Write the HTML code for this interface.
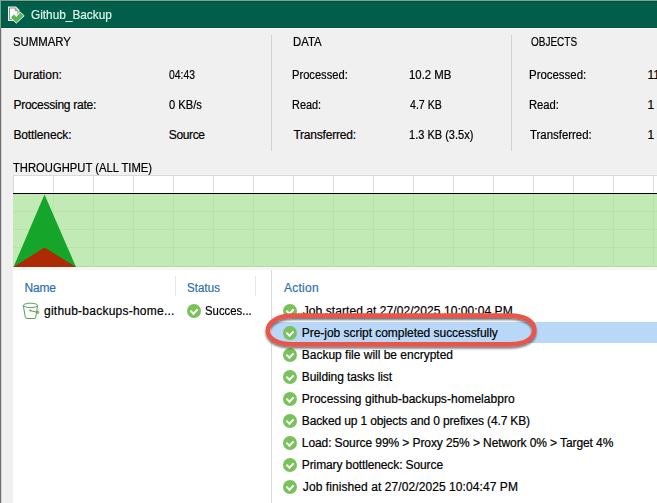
<!DOCTYPE html>
<html><head><meta charset="utf-8">
<style>
*{margin:0;padding:0;box-sizing:border-box}
html,body{width:657px;height:503px;overflow:hidden;background:#f0f0f0}
body{position:relative;font-family:"Liberation Sans",sans-serif;font-size:12px;color:#000}
.a{position:absolute;white-space:nowrap;line-height:14px;-webkit-text-stroke:0.2px currentColor}
.tt{font-size:13px;color:#dff4ee}
.hd{color:#2f6eb2}
#title{position:absolute;left:0;top:1px;width:657px;height:27px;background:linear-gradient(#0d4f3f 0,#0d4f3f 1px,#015e49 1px,#015e49 26px,#08523f 26px)}
#lb{position:absolute;left:0;top:0;width:1px;height:503px;background:linear-gradient(#74a596 0,#74a596 28px,#6f6f6f 28px)}
#lb2{position:absolute;left:1px;top:28px;width:1px;height:475px;background:#d4d4d4}
#topl{position:absolute;left:0;top:0;width:657px;height:1px;background:#74a596}
.sep{position:absolute;width:1px;background:#d2d2d2}
#panel{position:absolute;left:13px;top:270px;width:644px;height:233px;background:#fff}
#hl{position:absolute;left:272px;top:322px;width:385px;height:21px;background:#b9d8f7}
svg{position:absolute;left:0;top:0}
</style></head><body>
<div id="title"></div>
<div id="topl"></div>
<div id="lb"></div><div id="lb2"></div>
<div style="position:absolute;left:1px;top:28px;width:656px;height:1px;background:#f7f7f7"></div>
<svg width="30" height="28">
<path d="M8 6.5 H16 L19.5 10 V21 H8 Z" fill="#f4f6f5"/>
<path d="M9.5 8 H15.3 L18 10.7 V19.5 H9.5 Z" fill="#fbfbfb" stroke="#8a8f8d" stroke-width="1"/>
<path d="M15.3 8 V10.7 H18" fill="none" stroke="#8a8f8d" stroke-width="1"/>
<path d="M10.6 17.3 L13.8 14.1 L16.3 16.6 L20.2 12.1 L24.2 15.8 L16.2 23.2 Z" fill="#5db55a" stroke="#e8f5ec" stroke-width="1"/>
</svg>
<div class="sep" style="left:271px;top:35px;height:116px"></div>
<div class="sep" style="left:511px;top:35px;height:116px"></div>
<svg width="657" height="503">
<rect x="13" y="175" width="644" height="1" fill="#d9d9d9"/>
<rect x="13" y="175" width="1" height="18" fill="#d9d9d9"/>
<rect x="14" y="176" width="643" height="17" fill="#ffffff"/>
<rect x="13" y="194" width="644" height="73" fill="#c1eab4"/><rect x="13" y="267" width="644" height="3" fill="#f5f5f5"/>
<line x1="53.5" y1="176" x2="53.5" y2="193" stroke="#dedede"/><line x1="53.5" y1="194" x2="53.5" y2="266" stroke="#b9e1ac"/><line x1="93.5" y1="176" x2="93.5" y2="193" stroke="#dedede"/><line x1="93.5" y1="194" x2="93.5" y2="266" stroke="#b9e1ac"/><line x1="133.5" y1="176" x2="133.5" y2="193" stroke="#dedede"/><line x1="133.5" y1="194" x2="133.5" y2="266" stroke="#b9e1ac"/><line x1="173.5" y1="176" x2="173.5" y2="193" stroke="#dedede"/><line x1="173.5" y1="194" x2="173.5" y2="266" stroke="#b9e1ac"/><line x1="213.5" y1="176" x2="213.5" y2="193" stroke="#dedede"/><line x1="213.5" y1="194" x2="213.5" y2="266" stroke="#b9e1ac"/><line x1="253.5" y1="176" x2="253.5" y2="193" stroke="#dedede"/><line x1="253.5" y1="194" x2="253.5" y2="266" stroke="#b9e1ac"/><line x1="293.5" y1="176" x2="293.5" y2="193" stroke="#dedede"/><line x1="293.5" y1="194" x2="293.5" y2="266" stroke="#b9e1ac"/><line x1="333.5" y1="176" x2="333.5" y2="193" stroke="#dedede"/><line x1="333.5" y1="194" x2="333.5" y2="266" stroke="#b9e1ac"/><line x1="373.5" y1="176" x2="373.5" y2="193" stroke="#dedede"/><line x1="373.5" y1="194" x2="373.5" y2="266" stroke="#b9e1ac"/><line x1="413.5" y1="176" x2="413.5" y2="193" stroke="#dedede"/><line x1="413.5" y1="194" x2="413.5" y2="266" stroke="#b9e1ac"/><line x1="453.5" y1="176" x2="453.5" y2="193" stroke="#dedede"/><line x1="453.5" y1="194" x2="453.5" y2="266" stroke="#b9e1ac"/><line x1="493.5" y1="176" x2="493.5" y2="193" stroke="#dedede"/><line x1="493.5" y1="194" x2="493.5" y2="266" stroke="#b9e1ac"/><line x1="533.5" y1="176" x2="533.5" y2="193" stroke="#dedede"/><line x1="533.5" y1="194" x2="533.5" y2="266" stroke="#b9e1ac"/><line x1="573.5" y1="176" x2="573.5" y2="193" stroke="#dedede"/><line x1="573.5" y1="194" x2="573.5" y2="266" stroke="#b9e1ac"/><line x1="613.5" y1="176" x2="613.5" y2="193" stroke="#dedede"/><line x1="613.5" y1="194" x2="613.5" y2="266" stroke="#b9e1ac"/><line x1="653.5" y1="176" x2="653.5" y2="193" stroke="#dedede"/><line x1="653.5" y1="194" x2="653.5" y2="266" stroke="#b9e1ac"/><line x1="14" y1="211.5" x2="657" y2="211.5" stroke="#b9e1ac"/><line x1="14" y1="229.5" x2="657" y2="229.5" stroke="#b9e1ac"/><line x1="14" y1="247.5" x2="657" y2="247.5" stroke="#b9e1ac"/>
<rect x="13" y="266" width="644" height="1" fill="#b3d9a6"/>
<rect x="13" y="193" width="644" height="1" fill="#000"/>
<polygon points="13.5,267 44.5,194.5 76,267" fill="#14a52a"/>
<polygon points="13.5,267 44.5,247.5 76,267" fill="#ad2a04"/>
</svg>
<div id="panel"></div>
<div id="hl"></div>
<svg width="657" height="503">
<rect x="271" y="270" width="1" height="233" fill="#dadada"/>
<rect x="175" y="276" width="1" height="20" fill="#e6e6e6"/>
<rect x="255" y="276" width="1" height="20" fill="#e6e6e6"/>
<circle cx="194" cy="311" r="7" fill="#79c15a"/><path d="M190.4 310.6 L193.5 313.7 L197.6 309.4" fill="none" stroke="#fff" stroke-width="2"/>
<circle cx="290" cy="311" r="7" fill="#79c15a"/><path d="M286.4 310.6 L289.5 313.7 L293.6 309.4" fill="none" stroke="#fff" stroke-width="2"/><circle cx="290" cy="333" r="7" fill="#79c15a"/><path d="M286.4 332.6 L289.5 335.7 L293.6 331.4" fill="none" stroke="#fff" stroke-width="2"/><circle cx="290" cy="355" r="7" fill="#79c15a"/><path d="M286.4 354.6 L289.5 357.7 L293.6 353.4" fill="none" stroke="#fff" stroke-width="2"/><circle cx="290" cy="377" r="7" fill="#79c15a"/><path d="M286.4 376.6 L289.5 379.7 L293.6 375.4" fill="none" stroke="#fff" stroke-width="2"/><circle cx="290" cy="399" r="7" fill="#79c15a"/><path d="M286.4 398.6 L289.5 401.7 L293.6 397.4" fill="none" stroke="#fff" stroke-width="2"/><circle cx="290" cy="421" r="7" fill="#79c15a"/><path d="M286.4 420.6 L289.5 423.7 L293.6 419.4" fill="none" stroke="#fff" stroke-width="2"/><circle cx="290" cy="443" r="7" fill="#79c15a"/><path d="M286.4 442.6 L289.5 445.7 L293.6 441.4" fill="none" stroke="#fff" stroke-width="2"/><circle cx="290" cy="465" r="7" fill="#79c15a"/><path d="M286.4 464.6 L289.5 467.7 L293.6 463.4" fill="none" stroke="#fff" stroke-width="2"/><circle cx="290" cy="487" r="7" fill="#79c15a"/><path d="M286.4 486.6 L289.5 489.7 L293.6 485.4" fill="none" stroke="#fff" stroke-width="2"/>
<g fill="none" stroke="#56a05a" stroke-width="1">
<ellipse cx="30.5" cy="305.4" rx="7.1" ry="2.2"/>
<path d="M23.3 305.5 L25.3 317.2 Q25.6 318.5 27 318.5 L34 318.5 Q35.4 318.5 35.7 317.2 L37.6 305.5"/>
<path d="M30.3 310.6 L37.5 312.4"/>
<ellipse cx="37.9" cy="312.2" rx="0.8" ry="1.4"/>
</g>
<circle cx="30.3" cy="310.6" r="1" fill="#56a05a"/>
</svg>
<div id="t_title" class="a tt" style="left:31.00px;top:8px;transform:scaleX(0.9092);transform-origin:0 0">Github_Backup</div>
<div id="s_h" class="a" style="left:12.60px;top:35px;transform:scaleX(0.9478);transform-origin:0 0">SUMMARY</div>
<div id="s_1l" class="a" style="left:13.40px;top:68px;letter-spacing:-0.027px">Duration:</div>
<div id="s_1v" class="a" style="left:168.80px;top:68px;transform:scaleX(0.8634);transform-origin:0 0">04:43</div>
<div id="s_2l" class="a" style="left:13.40px;top:98px;letter-spacing:-0.252px">Processing rate:</div>
<div id="s_2v" class="a" style="left:168.80px;top:98px;transform:scaleX(0.9314);transform-origin:0 0">0 KB/s</div>
<div id="s_3l" class="a" style="left:13.40px;top:128px;letter-spacing:-0.120px">Bottleneck:</div>
<div id="s_3v" class="a" style="left:168.80px;top:128px;letter-spacing:-0.360px">Source</div>
<div id="d_h" class="a" style="left:292.80px;top:35px;transform:scaleX(0.9467);transform-origin:0 0">DATA</div>
<div id="d_1l" class="a" style="left:292.40px;top:68px;transform:scaleX(0.9288);transform-origin:0 0">Processed:</div>
<div id="d_1v" class="a" style="left:409.00px;top:68px;transform:scaleX(0.9490);transform-origin:0 0">10.2 MB</div>
<div id="d_2l" class="a" style="left:292.40px;top:98px;transform:scaleX(0.9101);transform-origin:0 0">Read:</div>
<div id="d_2v" class="a" style="left:410.00px;top:98px;transform:scaleX(0.8835);transform-origin:0 0">4.7 KB</div>
<div id="d_3l" class="a" style="left:293.40px;top:128px;letter-spacing:-0.199px">Transferred:</div>
<div id="d_3v" class="a" style="left:409.00px;top:128px;transform:scaleX(0.9188);transform-origin:0 0">1.3 KB (3.5x)</div>
<div id="o_h" class="a" style="left:530.80px;top:35px;transform:scaleX(0.8327);transform-origin:0 0">OBJECTS</div>
<div id="o_1l" class="a" style="left:529.40px;top:68px;transform:scaleX(0.9529);transform-origin:0 0">Processed:</div>
<div id="o_1v" class="a" style="left:647.40px;top:68px">11</div>
<div id="o_2l" class="a" style="left:529.40px;top:98px;transform:scaleX(0.9367);transform-origin:0 0">Read:</div>
<div id="o_2v" class="a" style="left:647.40px;top:98px">1</div>
<div id="o_3l" class="a" style="left:530.40px;top:128px;transform:scaleX(0.9500);transform-origin:0 0">Transferred:</div>
<div id="o_3v" class="a" style="left:647.40px;top:128px">1</div>
<div id="tp" class="a" style="left:13.40px;top:161px;transform:scaleX(0.9365);transform-origin:0 0">THROUGHPUT (ALL TIME)</div>
<div id="h_name" class="a hd" style="left:24.40px;top:280.5px;letter-spacing:-0.134px">Name</div>
<div id="h_status" class="a hd" style="left:187.20px;top:280.5px;transform:scaleX(0.9752);transform-origin:0 0">Status</div>
<div id="h_action" class="a hd" style="left:284.00px;top:280.5px;letter-spacing:0.240px">Action</div>
<div id="r_name" class="a" style="left:44.00px;top:303.5px;letter-spacing:0.238px">github-backups-home...</div>
<div id="r_status" class="a" style="left:205.40px;top:303.5px;transform:scaleX(0.9461);transform-origin:0 0">Succes...</div>
<div id="a0" class="a" style="left:302.80px;top:303.5px;letter-spacing:0.067px">Job started at 27/02/2025 10:00:04 PM</div>
<div id="a1" class="a" style="left:301.80px;top:325.5px;letter-spacing:-0.039px">Pre-job script completed successfully</div>
<div id="a2" class="a" style="left:301.80px;top:347.5px;letter-spacing:-0.008px">Backup file will be encrypted</div>
<div id="a3" class="a" style="left:301.80px;top:369.5px;letter-spacing:-0.099px">Building tasks list</div>
<div id="a4" class="a" style="left:301.80px;top:391.5px;letter-spacing:0.041px">Processing github-backups-homelabpro</div>
<div id="a5" class="a" style="left:301.80px;top:413.5px;letter-spacing:-0.139px">Backed up 1 objects and 0 prefixes (4.7 KB)</div>
<div id="a6" class="a" style="left:301.80px;top:435.5px;letter-spacing:-0.091px">Load: Source 99% &gt; Proxy 25% &gt; Network 0% &gt; Target 4%</div>
<div id="a7" class="a" style="left:301.80px;top:457.5px;letter-spacing:-0.112px">Primary bottleneck: Source</div>
<div id="a8" class="a" style="left:302.80px;top:479.5px;letter-spacing:0.081px">Job finished at 27/02/2025 10:04:47 PM</div>
<svg width="657" height="503">
<defs><filter id="sh" x="-10%" y="-50%" width="120%" height="200%"><feGaussianBlur in="SourceAlpha" stdDeviation="1.3"/><feOffset dx="0.4" dy="1.8"/><feComponentTransfer><feFuncA type="linear" slope="0.55"/></feComponentTransfer><feMerge><feMergeNode/><feMergeNode in="SourceGraphic"/></feMerge></filter></defs>
<path filter="url(#sh)" d="M293 315.6 H510 C526 315.6 534.3 322 534.3 330 C534.3 338 526 344.2 510 344.2 H293 C277 344.2 267.8 338.5 267.8 331 C267.8 322.5 277 315.6 293 315.6 Z" fill="none" stroke="#ea5448" stroke-width="4.6"/>
</svg>
</body></html>
